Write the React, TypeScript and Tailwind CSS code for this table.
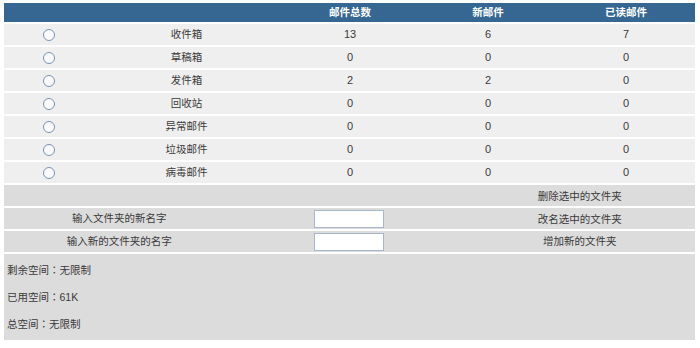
import React from "react";

const folders = [
  { name: "收件箱", total: 13, fresh: 6, read: 7 },
  { name: "草稿箱", total: 0, fresh: 0, read: 0 },
  { name: "发件箱", total: 2, fresh: 2, read: 0 },
  { name: "回收站", total: 0, fresh: 0, read: 0 },
  { name: "异常邮件", total: 0, fresh: 0, read: 0 },
  { name: "垃圾邮件", total: 0, fresh: 0, read: 0 },
  { name: "病毒邮件", total: 0, fresh: 0, read: 0 },
];

const font = {
  fontFamily: '"Liberation Sans", "Noto Sans CJK SC", sans-serif',
};

// Traditional-Chinese CJK face centres the full-width colon in its cell
const quotaFont = {
  fontFamily: '"Liberation Sans", "Noto Sans CJK TC", sans-serif',
};

const cols = "grid grid-cols-[88px_189px_138px_138px_138px]";

function Radio() {
  return (
    <span className="inline-block w-[12px] h-[12px] rounded-full border-[1.5px] border-[#7893b3] bg-[#fbfbfb]" />
  );
}

export default function App() {
  return (
    <div className="w-[700px] h-[348px] bg-white text-[10.5px] text-[#3a3a3a]" style={font}>
      <div className="ml-[4px] pt-[3px] w-[691px] flex flex-col gap-[2px]">
        <div className={`${cols} h-[19px] bg-[#366792] text-white font-bold items-center text-center`}>
          <div />
          <div />
          <div>邮件总数</div>
          <div>新邮件</div>
          <div>已读邮件</div>
        </div>
        {folders.map((f) => (
          <div key={f.name} className={`${cols} h-[21px] bg-[#efefef] items-center text-center`}>
            <div className="flex justify-center pl-[2px]">
              <Radio />
            </div>
            <div>{f.name}</div>
            <div className="text-[11px]">{f.total}</div>
            <div className="text-[11px]">{f.fresh}</div>
            <div className="text-[11px]">{f.read}</div>
          </div>
        ))}
        <div className="grid grid-cols-3 h-[21px] bg-[#dcdcdc] items-center text-center">
          <div />
          <div />
          <div className="pt-[2px]">删除选中的文件夹</div>
        </div>
        <div className="grid grid-cols-3 h-[21px] bg-[#dcdcdc] items-center text-center">
          <div>输入文件夹的新名字</div>
          <div className="flex justify-center">
            <input
              type="text"
              className="w-[70px] h-[18px] bg-white border border-[#a8b8cc] outline-none"
            />
          </div>
          <div className="pt-[2px]">改名选中的文件夹</div>
        </div>
        <div className="grid grid-cols-3 h-[21px] bg-[#dcdcdc] items-center text-center">
          <div>输入新的文件夹的名字</div>
          <div className="flex justify-center">
            <input
              type="text"
              className="w-[70px] h-[18px] bg-white border border-[#a8b8cc] outline-none"
            />
          </div>
          <div>增加新的文件夹</div>
        </div>
        <div className="h-[86px] bg-[#dcdcdc] pt-[3px] pl-[3px] leading-[27px]" style={quotaFont}>
          <div>剩余空间：无限制</div>
          <div>已用空间：61K</div>
          <div>总空间：无限制</div>
        </div>
      </div>
    </div>
  );
}
